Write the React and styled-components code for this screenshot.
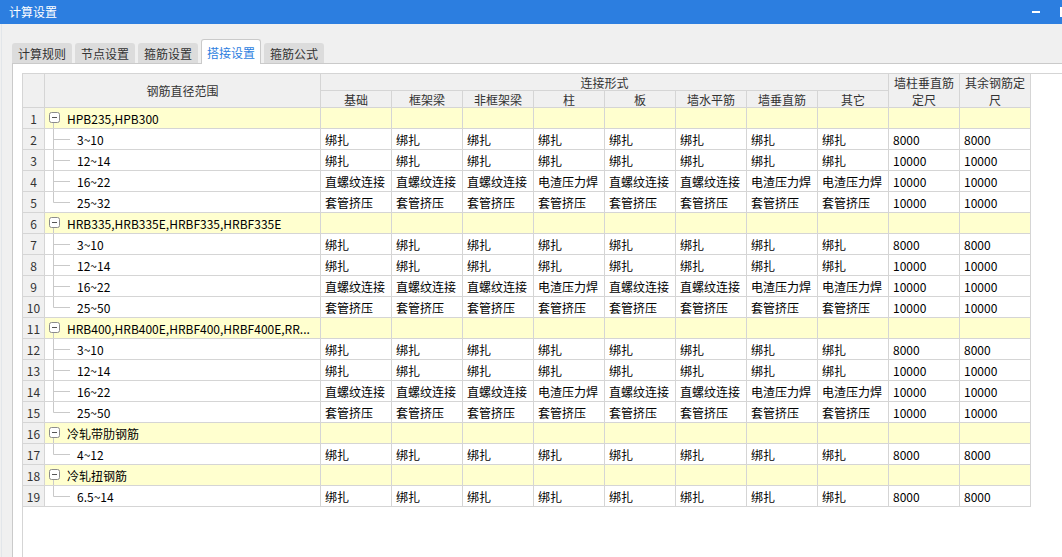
import React from 'react';
import styled, { createGlobalStyle } from 'styled-components';

const Global = createGlobalStyle`
  html, body { margin: 0; padding: 0; overflow: hidden; }
  body {
    background: #f0f0f0;
    font-family: "Noto Sans CJK SC", "Noto Sans", sans-serif;
    font-size: 12px;
    color: #000;
  }
`;

const Window = styled.div`
  width: 1062px;
  height: 557px;
  display: flex;
  flex-direction: column;
  overflow: hidden;
`;

const TitleBar = styled.div`
  height: 24px;
  flex: none;
  background: #2c7ee0;
  color: #fff;
  display: flex;
  align-items: center;
  justify-content: space-between;
  padding-left: 9px;
  overflow: hidden;
`;

const Title = styled.span`
  font-size: 12px;
  line-height: 24px;
`;

const Controls = styled.div`
  display: flex;
  align-items: center;
  gap: 20px;
  margin-right: -8px;
`;

const MinIcon = styled.span`
  width: 8px;
  height: 2px;
  background: #fff;
`;

const MaxIcon = styled.span`
  width: 6px;
  height: 6px;
  border: 2px solid #fff;
`;

const Body = styled.div`
  flex: 1;
  display: flex;
  flex-direction: column;
  padding: 15px 0 0 12px;
  min-height: 0;
  border-left: 1px solid #e2e6ea;
  margin-left: 1px;
`;

const TabBar = styled.div`
  height: 24px;
  flex: none;
  display: flex;
  align-items: flex-end;
  gap: 3px;
  margin-left: -2px;
`;

const Tab = styled.div`
  box-sizing: border-box;
  height: ${p => (p.$active ? '25px' : '20px')};
  margin-bottom: ${p => (p.$active ? '-1px' : '0')};
  padding: ${p => (p.$active ? '4px 5px 0' : '0 6px')};
  border-radius: 3px 3px 0 0;
  background: ${p => (p.$active ? '#fff' : '#dcdcdc')};
  border: ${p => (p.$active ? '1px solid #cacaca' : 'none')};
  border-bottom: none;
  color: ${p => (p.$active ? '#2c7ee0' : '#333')};
  display: flex;
  align-items: ${p => (p.$active ? 'flex-start' : 'center')};
  position: relative;
  z-index: ${p => (p.$active ? 1 : 0)};
  white-space: nowrap;
`;

const Panel = styled.div`
  flex: 1;
  min-height: 0;
  background: #fff;
  border-top: 1px solid #cacaca;
  border-left: 1px solid #cacaca;
  margin-left: -2px;
  display: flex;
  padding: 9px 0 0 9px;
`;

const GridFrame = styled.div`
  flex: 1;
  border-top: 1px solid #d5d5d5;
  border-left: 1px solid #d5d5d5;
`;

const Grid = styled.div`
  display: grid;
  grid-template-columns: 22px 276px repeat(10, 71px);
  grid-template-rows: 17px 17px;
  grid-auto-rows: 21px;
  width: 1008px;
`;

const HeadCell = styled.div`
  box-sizing: border-box;
  background: #f0f0f0;
  border-right: 1px solid #d5d5d5;
  border-bottom: 1px solid #d5d5d5;
  color: #333;
  display: flex;
  align-items: center;
  justify-content: center;
  text-align: center;
  line-height: 17px;
  white-space: nowrap;
  grid-column: ${p => p.$col || 'auto'};
  grid-row: ${p => p.$row || 'auto'};
`;

const NumCell = styled.div`
  box-sizing: border-box;
  background: #f0f0f0;
  border-right: 1px solid #d5d5d5;
  border-bottom: 1px solid #d5d5d5;
  color: #333;
  display: flex;
  align-items: center;
  justify-content: center;
`;

const Cell = styled.div`
  box-sizing: border-box;
  background: ${p => (p.$group ? '#ffffcf' : '#fff')};
  border-right: 1px solid #d5d5d5;
  border-bottom: 1px solid #d5d5d5;
  display: flex;
  align-items: center;
  padding: 0 4px;
  white-space: nowrap;
  overflow: hidden;
  color: #000;
`;

const RangeCell = styled(Cell)`
  padding: 0 0 0 ${p => (p.$group ? '4px' : '8px')};
  align-items: stretch;
`;

const RangeText = styled.span`
  display: flex;
  align-items: center;
  margin-left: 7px;
`;

const TreeLine = '#c9c9c9';

const GroupToggle = () => (
  <svg width="11" height="20" viewBox="0 0 11 20" style={{ flex: 'none' }}>
    <rect x="0.5" y="4.5" width="10" height="10" rx="2" fill="#fff" stroke="#8c8c8c" />
    <line x1="3" y1="9.5" x2="8" y2="9.5" stroke="#555" />
    <line x1="4.5" y1="15" x2="4.5" y2="20" stroke={TreeLine} />
  </svg>
);

const Connector = ({ last }) => (
  <svg width="17" height="20" viewBox="0 0 17 20" style={{ flex: 'none' }}>
    <line x1="0.5" y1="0" x2="0.5" y2={last ? 10.5 : 20} stroke={TreeLine} />
    <line x1="0.5" y1="10.5" x2="17" y2="10.5" stroke={TreeLine} />
  </svg>
);

const B = '绑扎';
const Z = '直螺纹连接';
const D = '电渣压力焊';
const T = '套管挤压';

const bindRow = [B, B, B, B, B, B, B, B];
const weldRow = [Z, Z, Z, D, Z, Z, D, D];
const sleeveRow = [T, T, T, T, T, T, T, T];

const std = (last) => [
  { range: '3~10', vals: bindRow, a: '8000', b: '8000' },
  { range: '12~14', vals: bindRow, a: '10000', b: '10000' },
  { range: '16~22', vals: weldRow, a: '10000', b: '10000' },
  { range: last, vals: sleeveRow, a: '10000', b: '10000' },
];

const groups = [
  { name: 'HPB235,HPB300', children: std('25~32') },
  { name: 'HRB335,HRB335E,HRBF335,HRBF335E', children: std('25~50') },
  { name: 'HRB400,HRB400E,HRBF400,HRBF400E,RR...', children: std('25~50') },
  { name: '冷轧带肋钢筋', children: [{ range: '4~12', vals: bindRow, a: '8000', b: '8000' }] },
  { name: '冷轧扭钢筋', children: [{ range: '6.5~14', vals: bindRow, a: '8000', b: '8000' }] },
];

const subHeads = ['基础', '框架梁', '非框架梁', '柱', '板', '墙水平筋', '墙垂直筋', '其它'];

export default function App() {
  let n = 0;
  const rows = [];
  groups.forEach((g, gi) => {
    n += 1;
    rows.push(
      <React.Fragment key={`g${gi}`}>
        <NumCell>{n}</NumCell>
        <RangeCell $group>
          <GroupToggle />
          <RangeText>{g.name}</RangeText>
        </RangeCell>
        {Array.from({ length: 10 }).map((_, i) => (
          <Cell key={i} $group />
        ))}
      </React.Fragment>
    );
    g.children.forEach((c, ci) => {
      n += 1;
      rows.push(
        <React.Fragment key={`c${gi}-${ci}`}>
          <NumCell>{n}</NumCell>
          <RangeCell>
            <Connector last={ci === g.children.length - 1} />
            <RangeText>{c.range}</RangeText>
          </RangeCell>
          {c.vals.map((v, i) => (
            <Cell key={i}>{v}</Cell>
          ))}
          <Cell>{c.a}</Cell>
          <Cell>{c.b}</Cell>
        </React.Fragment>
      );
    });
  });

  return (
    <Window>
      <Global />
      <TitleBar>
        <Title>计算设置</Title>
        <Controls>
          <MinIcon />
          <MaxIcon />
        </Controls>
      </TitleBar>
      <Body>
        <TabBar>
          <Tab>计算规则</Tab>
          <Tab>节点设置</Tab>
          <Tab>箍筋设置</Tab>
          <Tab $active>搭接设置</Tab>
          <Tab>箍筋公式</Tab>
        </TabBar>
        <Panel>
          <GridFrame>
            <Grid>
              <HeadCell $col="1" $row="1 / 3" />
              <HeadCell $col="2" $row="1 / 3">钢筋直径范围</HeadCell>
              <HeadCell $col="3 / 11" $row="1">连接形式</HeadCell>
              <HeadCell $col="11" $row="1 / 3">
                墙柱垂直筋
                <br />
                定尺
              </HeadCell>
              <HeadCell $col="12" $row="1 / 3">
                其余钢筋定
                <br />
                尺
              </HeadCell>
              {subHeads.map((h, i) => (
                <HeadCell key={h} $col={`${i + 3}`} $row="2">
                  {h}
                </HeadCell>
              ))}
              {rows}
            </Grid>
          </GridFrame>
        </Panel>
      </Body>
    </Window>
  );
}
